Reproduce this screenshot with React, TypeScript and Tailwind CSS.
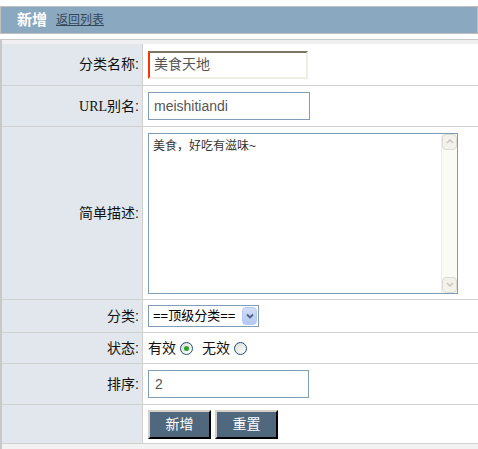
import type { ReactNode } from 'react'

const font = { fontFamily: '"Liberation Sans", "Noto Sans CJK SC", sans-serif' }

function Row({ label, h, children }: { label: ReactNode; h: string; children?: ReactNode }) {
  return (
    <div className={`grid grid-cols-[141px_1fr] border-b border-[#d0d0d0] ${h}`}>
      <div className="flex items-center justify-end border-r border-[#d0d0d0] bg-[#e1e7ec] pr-[3px] text-[14px] text-[#111]">
        {label}
      </div>
      <div className="flex items-center pl-[5px]">{children}</div>
    </div>
  )
}

function Radio({ checked }: { checked?: boolean }) {
  return (
    <span className="flex h-[13px] w-[13px] items-center justify-center rounded-full border border-[#1c4f7c] bg-gradient-to-br from-[#dcdcd6] to-white">
      {checked && <span className="h-[5px] w-[5px] rounded-full bg-[#2aa32a]" />}
    </span>
  )
}

function Btn({ children }: { children: ReactNode }) {
  return (
    <button className="flex h-[29px] w-[63px] items-center justify-center border-2 border-t-[#d4d0c8] border-l-[#d4d0c8] border-b-black border-r-black bg-[#4f687e] text-[14px] text-white">
      {children}
    </button>
  )
}

export default function App() {
  return (
    <div className="h-[449px] w-[478px] overflow-hidden bg-white" style={font}>
      <div className="mt-[6px] flex h-[28px] items-center border border-[#c0c0c0] bg-[#8aa8c0] pl-[16px]">
        <span className="text-[15px] font-bold text-white">新增</span>
        <a className="ml-[9px] text-[12px] text-[#33475b] underline">返回列表</a>
      </div>

      <div className="mt-[5px] border-t border-l-2 border-[#c8c8c8]">
        <div className="h-[4px] bg-[#f0f0f0]" />

        <Row label="分类名称:" h="h-[42px]">
          <div className="flex h-[28px] w-[160px] items-center border-2 border-t-[#7b7766] border-l-[#ff3300] border-r-[#efeee4] border-b-[#efeee4] pl-[4px] text-[14px] text-[#555]">
            美食天地
          </div>
        </Row>

        <Row
          label={
            <>
              <span style={{ fontFamily: '"Liberation Serif", serif' }}>URL</span>别名:
            </>
          }
          h="h-[41px]"
        >
          <div className="flex h-[28px] w-[162px] items-center border border-[#7f9db9] pl-[5px] text-[14px] text-[#555]">
            meishitiandi
          </div>
        </Row>

        <Row label="简单描述:" h="h-[173px]">
          <div className="flex h-[161px] w-[310px] border border-[#7f9db9]">
            <div className="flex-1 pl-[4px] pt-[3px] text-[12px] text-[#333]">美食，好吃有滋味~</div>
            <div className="flex w-[16px] flex-col justify-between border-l border-[#eeede5] bg-[#fbfbf6]">
              <div className="flex h-[16px] items-center justify-center rounded-sm border border-[#dcdbd0] bg-[#f2f1ea]">
                <svg width="8" height="5" viewBox="0 0 8 5">
                  <path d="M1 4 L4 1 L7 4" stroke="#c8c7bd" strokeWidth="1.5" fill="none" />
                </svg>
              </div>
              <div className="flex h-[16px] items-center justify-center rounded-sm border border-[#dcdbd0] bg-[#f2f1ea]">
                <svg width="8" height="5" viewBox="0 0 8 5">
                  <path d="M1 1 L4 4 L7 1" stroke="#c8c7bd" strokeWidth="1.5" fill="none" />
                </svg>
              </div>
            </div>
          </div>
        </Row>

        <Row label="分类:" h="h-[33px]">
          <div className="flex h-[22px] w-[111px] items-center border border-[#7f9db9] p-[1px]">
            <span className="flex-1 pl-[3px] text-[13px] text-black">==顶级分类==</span>
            <span className="flex h-[18px] w-[15px] items-center justify-center rounded-sm border border-[#b8c9ef] bg-gradient-to-b from-[#d2def9] to-[#b3c6f2]">
              <svg width="8" height="6" viewBox="0 0 8 6">
                <path d="M1 1.5 L4 4.5 L7 1.5" stroke="#4d6185" strokeWidth="1.8" fill="none" />
              </svg>
            </span>
          </div>
        </Row>

        <Row label="状态:" h="h-[31px]">
          <div className="flex items-center text-[14px] text-[#111]">
            <span>有效</span>
            <span className="ml-[4px]">
              <Radio checked />
            </span>
            <span className="ml-[9px]">无效</span>
            <span className="ml-[4px]">
              <Radio />
            </span>
          </div>
        </Row>

        <Row label="排序:" h="h-[41px]">
          <div className="flex h-[28px] w-[161px] items-center border border-[#7f9db9] pl-[6px] text-[14px] text-[#555]">
            2
          </div>
        </Row>

        <Row label="" h="h-[39px]">
          <div className="flex gap-[4px]">
            <Btn>新增</Btn>
            <Btn>重置</Btn>
          </div>
        </Row>

        <div className="h-[6px] bg-[#f2f2f2]" />
      </div>
    </div>
  )
}
